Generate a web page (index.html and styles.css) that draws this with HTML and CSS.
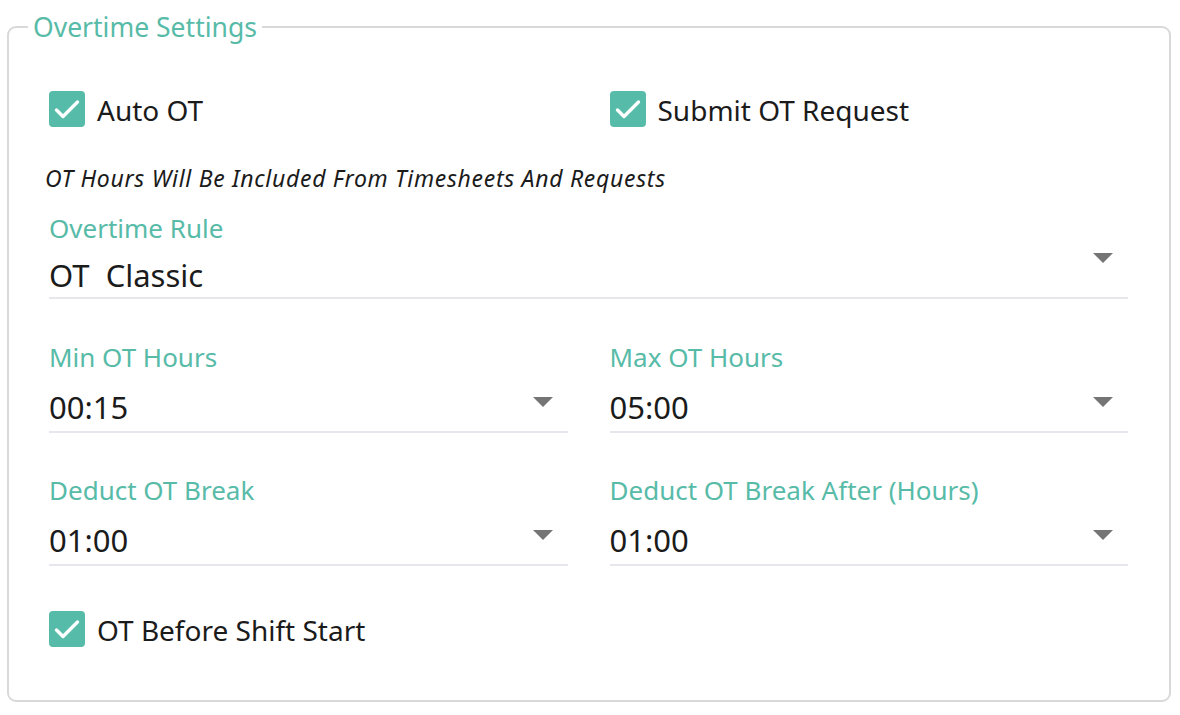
FILE: index.html
```html
<!DOCTYPE html>
<html>
<head>
<meta charset="utf-8">
<link rel="stylesheet" href="styles.css">
</head>
<body>
<div class="page">
  <fieldset class="panel">
    <legend class="legend">Overtime Settings</legend>
    <div class="content">
      <div class="row checks-top">
        <label class="check">
          <span class="box"><svg viewBox="0 0 36 36" width="36" height="36"><path d="M7.5 19l6.5 6.5L28.5 11" fill="none" stroke="#fff" stroke-width="3.4" stroke-linecap="round" stroke-linejoin="round"/></svg></span>
          <span class="check-text">Auto OT</span>
        </label>
        <label class="check">
          <span class="box"><svg viewBox="0 0 36 36" width="36" height="36"><path d="M7.5 19l6.5 6.5L28.5 11" fill="none" stroke="#fff" stroke-width="3.4" stroke-linecap="round" stroke-linejoin="round"/></svg></span>
          <span class="check-text">Submit OT Request</span>
        </label>
      </div>
      <p class="note">OT Hours Will Be Included From Timesheets And Requests</p>
      <div class="field field-rule">
        <div class="label">Overtime Rule</div>
        <div class="select select-rule">
          <span class="value">OT&nbsp; Classic</span>
          <span class="arrow arrow-rule"></span>
        </div>
      </div>
      <div class="row fields-row">
        <div class="field">
          <div class="label">Min OT Hours</div>
          <div class="select">
            <span class="value">00:15</span>
            <span class="arrow"></span>
          </div>
        </div>
        <div class="field">
          <div class="label">Max OT Hours</div>
          <div class="select">
            <span class="value">05:00</span>
            <span class="arrow"></span>
          </div>
        </div>
      </div>
      <div class="row fields-row">
        <div class="field">
          <div class="label">Deduct OT Break</div>
          <div class="select">
            <span class="value">01:00</span>
            <span class="arrow"></span>
          </div>
        </div>
        <div class="field">
          <div class="label">Deduct OT Break After (Hours)</div>
          <div class="select">
            <span class="value">01:00</span>
            <span class="arrow"></span>
          </div>
        </div>
      </div>
      <div class="row checks-bottom">
        <label class="check">
          <span class="box"><svg viewBox="0 0 36 36" width="36" height="36"><path d="M7.5 19l6.5 6.5L28.5 11" fill="none" stroke="#fff" stroke-width="3.4" stroke-linecap="round" stroke-linejoin="round"/></svg></span>
          <span class="check-text">OT Before Shift Start</span>
        </label>
      </div>
    </div>
  </fieldset>
</div>
</body>
</html>
```
FILE: styles.css
```css
* { box-sizing: border-box; }
html, body { margin: 0; padding: 0; background: #fff; }
body { font-family: "Noto Sans", "Open Sans", sans-serif; color: #1b1b1b; }
.page { padding: 12px 9px 0 7px; width: 1180px; }
.panel {
  margin: 0;
  padding: 0;
  border: 2px solid #d9d9dc;
  border-radius: 9px;
  min-width: 0;
}
.legend {
  margin-left: 19px;
  padding: 0 5px;
  font-size: 26.5px;
  line-height: 30px;
  color: #57bba8;
}
.content { padding: 49px 41px 53px 40px; }
.row { display: grid; grid-template-columns: 1fr 1fr; column-gap: 42px; }
.check { display: flex; align-items: center; gap: 12px; height: 36px; }
.box {
  width: 36px; height: 36px; border-radius: 4px; background: #56bba8;
  display: flex; align-items: center; justify-content: center;
}
.box svg { display: block; }
.check-text { font-size: 28px; line-height: 36px; color: #1b1b1b; margin-top: 2px; }
.note {
  margin: 39px 0 0 -4px;
  font-style: italic;
  font-size: 23px;
  letter-spacing: 0.7px;
  line-height: 24px;
  color: #1b1b1b;
}
.field-rule { margin-top: 22px; }
.label { font-size: 26px; line-height: 32px; color: #57bba8; }
.select {
  position: relative;
  border-bottom: 2px solid #e6e6ec;
  padding: 14px 0 4px;
}
.select-rule { padding: 11px 0 2px; }
.value { display: block; font-size: 31px; line-height: 40px; color: #1b1b1b; }
.arrow {
  position: absolute;
  right: 15px;
  top: 24px;
  width: 0; height: 0;
  border-left: 10px solid transparent;
  border-right: 10px solid transparent;
  border-top: 10px solid #757575;
}
.arrow-rule { top: 9px; }
.fields-row { margin-top: 42px; }
.fields-row + .fields-row { margin-top: 41px; }
.checks-bottom { margin-top: 45px; }
```
